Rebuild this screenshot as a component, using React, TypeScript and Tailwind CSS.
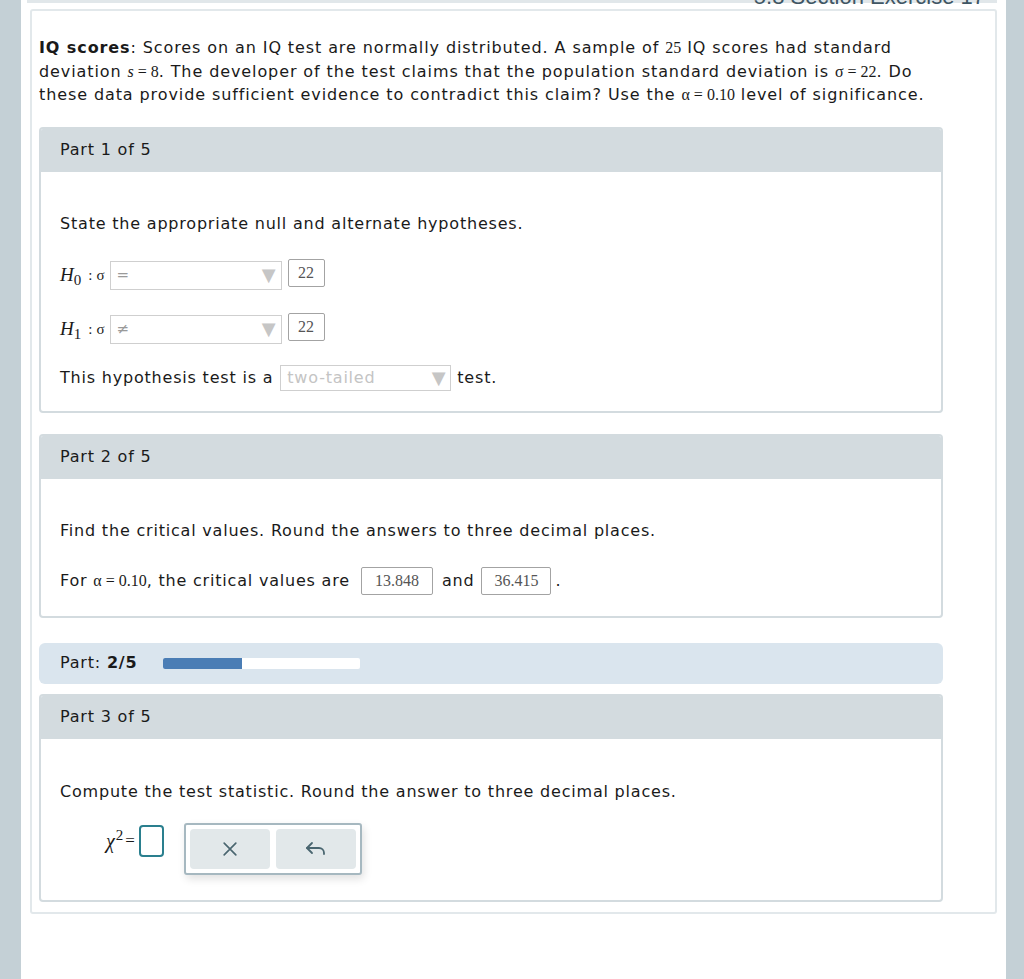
import React from "react";

const sans = "font-['DejaVu_Sans','Verdana',sans-serif]";
const serif = "font-['Liberation_Serif','Times_New_Roman',serif] tracking-normal";

function M({ children, italic }: { children: React.ReactNode; italic?: boolean }) {
  return <span className={`${serif} text-[16px] ${italic ? "italic" : ""}`}>{children}</span>;
}

function Select({ value, width, faded }: { value: string; width: string; faded?: boolean }) {
  return (
    <div
      className={`flex items-center justify-between border border-[#cfcfcf] bg-white pl-[6px] pr-[4px] ${width}`}
    >
      <span className={`${faded ? "text-[16px] text-[#c4c4c4]" : "text-[15px] text-[#9a9a9a]"}`}>{value}</span>
      <span className="text-[18px] leading-none text-[#c6c6c6]">▼</span>
    </div>
  );
}

function Box({ value, w }: { value: string; w: string }) {
  return (
    <span
      className={`inline-flex h-[28px] items-center justify-center rounded-[2px] border border-[#a3a3a3] ${serif} text-[16px] text-[#555] ${w}`}
    >
      {value}
    </span>
  );
}

function PartCard({ title, children }: { title: string; children: React.ReactNode }) {
  return (
    <div className="overflow-hidden rounded-[4px] border-2 border-[#d3dbdf] bg-white">
      <div className="flex h-[43px] items-center bg-[#d3dbdf] pl-[19px] text-[16px] text-[#1a1a1a]">
        {title}
      </div>
      <div className="pl-[19px]">{children}</div>
    </div>
  );
}

function Hyp({ sub, op }: { sub: string; op: string }) {
  return (
    <div className="flex items-center whitespace-nowrap">
      <span className={`${serif} text-[19px] italic`}>
        H<sub className="text-[15px] not-italic">{sub}</sub>
      </span>
      <span className={`${serif} ml-[7px] text-[15px]`}>:</span>
      <span className={`${serif} ml-[4px] text-[15px]`}>σ</span>
      <div className="ml-[5px] flex items-center gap-[6px]">
        <Select value={op} width="h-[29px] w-[172px]" />
        <div className="-mt-[5px]">
          <Box value="22" w="w-[37px]" />
        </div>
      </div>
    </div>
  );
}

export default function App() {
  return (
    <div className={`flex min-h-screen bg-[#c4d0d6] ${sans} tracking-[0.8px] text-[#1a1a1a]`}>
      <div className="ml-[21px] w-[985px] bg-white">
        {/* page title strip, scrolled mostly out of view */}
        <div className="h-[5px] overflow-hidden pl-[6px] pr-[9px]">
          <div className="flex h-[3px] justify-end bg-[#e1e7ea]">
            <span className="-mt-[14px] mr-[12px] font-['Liberation_Sans',Arial,sans-serif] text-[22px] leading-none tracking-normal text-[#3f5664]">
              5.8 Section Exercise 17
            </span>
          </div>
        </div>

        <div className="mx-[9px] mt-[4px] rounded-[3px] border-2 border-[#e2e8eb] pb-[10px] pl-[7px] pr-[52px] pt-[25px]">
          <p className="pr-[10px] text-[16px] leading-[23.5px] tracking-[0.9px]">
            <b>IQ scores</b>: Scores on an IQ test are normally distributed. A sample of <M>25</M> IQ scores had
            standard deviation <M italic>s</M>
            <M> = 8</M>. The developer of the test claims that the population standard deviation is <M>σ = 22</M>. Do
            these data provide sufficient evidence to contradict this claim? Use the <M>α = 0.10</M> level of
            significance.
          </p>

          <div className="mt-[20px]">
            <PartCard title="Part 1 of 5">
              <p className="pt-[40px] text-[16px] leading-[24px]">State the appropriate null and alternate hypotheses.</p>
              <div className="mt-[25px]">
                <Hyp sub="0" op="=" />
              </div>
              <div className="mt-[25px]">
                <Hyp sub="1" op="≠" />
              </div>
              <div className="mt-[21px] flex items-center pb-[20px] text-[16px] whitespace-nowrap">
                <span>This hypothesis test is a</span>
                <div className="ml-[7px] mr-[6px]">
                  <Select value="two-tailed" width="h-[26px] w-[171px]" faded />
                </div>
                <span>test.</span>
              </div>
            </PartCard>
          </div>

          <div className="mt-[21px]">
            <PartCard title="Part 2 of 5">
              <p className="pt-[40px] text-[16px] leading-[24px]">
                Find the critical values. Round the answers to three decimal places.
              </p>
              <div className="mt-[24px] flex items-center pb-[21px] text-[16px] whitespace-nowrap">
                <span>
                  For <M>α = 0.10</M>, the critical values are
                </span>
                <span className="ml-[11px] mr-[9px]">
                  <Box value="13.848" w="w-[72px]" />
                </span>
                <span>and</span>
                <span className="ml-[7px] mr-[4px]">
                  <Box value="36.415" w="w-[70px]" />
                </span>
                <span>.</span>
              </div>
            </PartCard>
          </div>

          <div className="mt-[25px] flex h-[41px] items-center rounded-[6px] bg-[#dae5ee] pl-[21px] text-[16px]">
            <span className="w-[82px]">
              Part: <b>2/5</b>
            </span>
            <div className="ml-[21px] h-[11px] w-[197px] overflow-hidden rounded-[2px] bg-white">
              <div className="h-full w-[79px] bg-[#4a7db5]" />
            </div>
          </div>

          <div className="mt-[10px]">
            <PartCard title="Part 3 of 5">
              <p className="pt-[41px] text-[16px] leading-[24px]">
                Compute the test statistic. Round the answer to three decimal places.
              </p>
              <div className="mt-[19px] flex items-start pb-[25px]">
                <div className="ml-[46px] mt-[2px] flex items-center whitespace-nowrap">
                  <span className={`${serif} text-[20px] italic`}>
                    χ<sup className="ml-[1px] text-[15px] not-italic">2</sup>
                  </span>
                  <span className={`${serif} ml-[2px] text-[17px]`}>=</span>
                  <span className="ml-[4px] h-[32px] w-[25px] rounded-[4px] border-2 border-[#2a7f8e]" />
                </div>
                <div className="ml-[20px] flex gap-[6px] rounded-[3px] border-2 border-[#a6b8c0] bg-white p-[4px] shadow-[2px_4px_8px_rgba(0,0,0,0.12)]">
                  <button className="flex h-[40px] w-[80px] items-center justify-center rounded-[4px] bg-[#e2e8ea] text-[#4a6670]">
                    <svg width="20" height="20" viewBox="0 0 24 24" fill="none" stroke="currentColor" strokeWidth="2" strokeLinecap="round">
                      <path d="M5 5l14 14M19 5L5 19" />
                    </svg>
                  </button>
                  <button className="flex h-[40px] w-[80px] items-center justify-center rounded-[4px] bg-[#e2e8ea] text-[#4a6670]">
                    <svg width="24" height="24" viewBox="0 0 24 24" fill="none" stroke="currentColor" strokeWidth="1.8" strokeLinecap="round" strokeLinejoin="round">
                      <path d="M8 6 3 11l5 5" />
                      <path d="M3 11h12a5 5 0 0 1 5 5v1" />
                    </svg>
                  </button>
                </div>
              </div>
            </PartCard>
          </div>
        </div>
      </div>
    </div>
  );
}
